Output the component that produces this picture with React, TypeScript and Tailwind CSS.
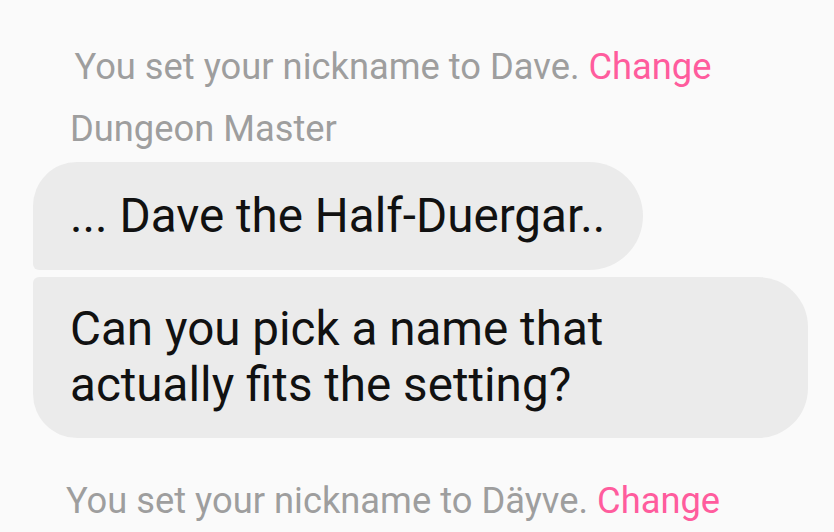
import React from "react";

export default function App() {
  return (
    <div
      className="w-[834px] h-[532px] bg-[#fafafa] overflow-hidden flex flex-col"
      style={{ fontFamily: "Roboto, 'Noto Sans', sans-serif" }}
    >
      <div className="pt-[46px] pr-[48px] text-center text-[36.3px] leading-[42px] text-[#9e9e9e]">
        You set your nickname to Dave. <span className="text-[#ff5c9d]">Change</span>
      </div>
      <div className="mt-[20px] pl-[70px] text-[36.3px] leading-[42px] text-[#9e9e9e]">
        Dungeon Master
      </div>
      <div className="mt-[12px] ml-[33px] self-start bg-[#ebebeb] rounded-tl-[44px] rounded-bl-[6px] rounded-tr-[54px] rounded-br-[54px] pl-[37px] pr-[38px] pt-[26px] pb-[26px] text-[47.6px] leading-[56px] text-[#111]">
        ... Dave the Half-Duergar..
      </div>
      <div className="mt-[7px] ml-[33px] w-[775px] bg-[#ebebeb] rounded-tl-[6px] rounded-bl-[44px] rounded-tr-[50px] rounded-br-[50px] pl-[37px] pr-[38px] pt-[24px] pb-[25px] text-[47.6px] leading-[56px] text-[#111]">
        Can you pick a name that actually fits the setting?
      </div>
      <div className="mt-[42px] pr-[48px] text-center text-[36.3px] leading-[42px] text-[#9e9e9e] whitespace-nowrap">
        You set your nickname to Däyve. <span className="text-[#ff5c9d]">Change</span>
      </div>
    </div>
  );
}
